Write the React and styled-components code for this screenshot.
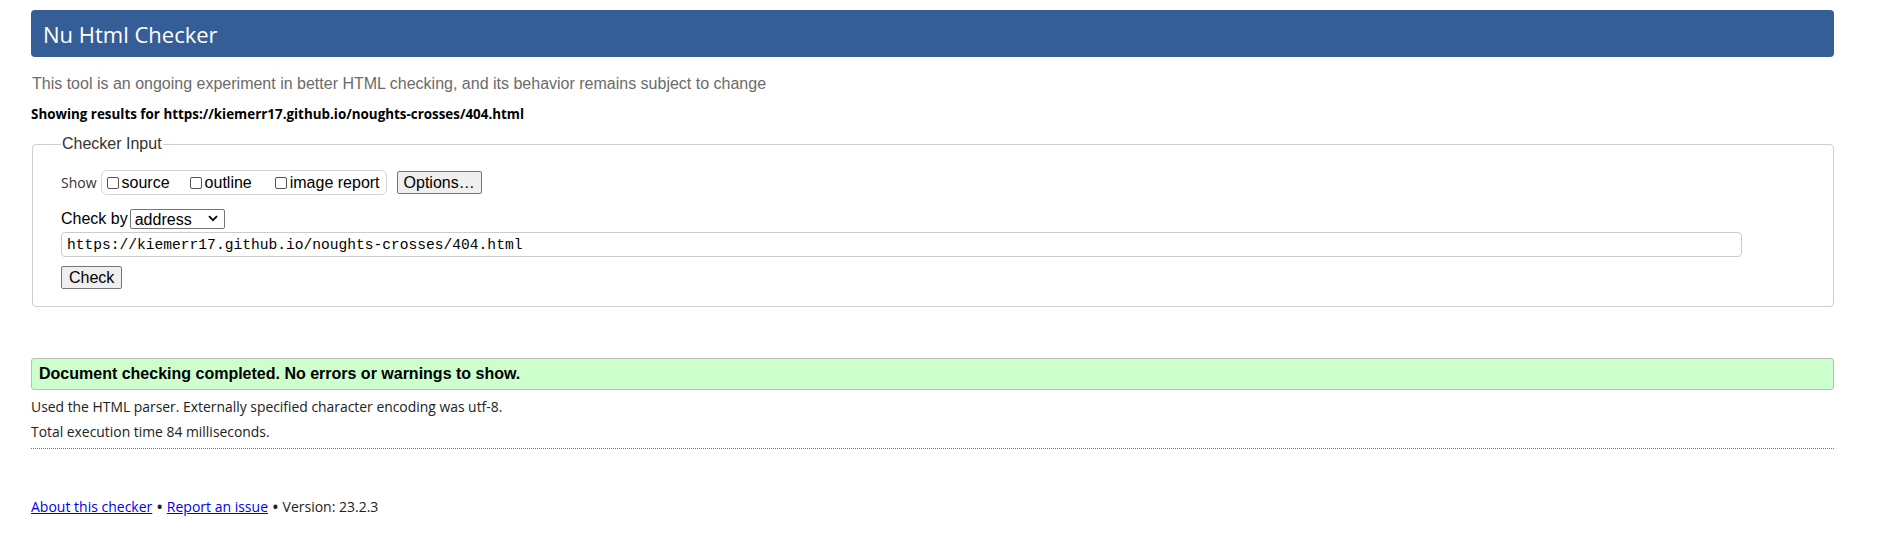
import React from "react";
import styled, { createGlobalStyle } from "styled-components";

const Global = createGlobalStyle`
  html, body { margin: 0; padding: 0; background: #fff; }
  body { font-family: "Liberation Sans", Arial, sans-serif; color: #000; }
`;

const Page = styled.div`
  width: 1803px;
  margin-left: 31px;
  padding-top: 10px;
`;

const Header = styled.h1`
  margin: 0;
  height: 47px;
  display: flex;
  align-items: center;
  padding-left: 12px;
  background: #365e96;
  border-radius: 4px;
  color: #fff;
  font-family: "Open Sans", sans-serif;
  font-weight: 400;
  font-size: 22px;
`;

const Intro = styled.p`
  margin: 17px 0 0 1px;
  font-size: 16px;
  line-height: 20px;
  color: #6b6b6b;
`;

const Showing = styled.p`
  margin: 10px 0 0 0;
  font-family: "Open Sans", sans-serif;
  font-weight: 700;
  font-size: 13.4px;
  line-height: 20px;
`;

const Fieldset = styled.fieldset`
  margin: 11px 0 0 1px;
  padding: 17px 28px 17px 28px;
  border: 1px solid #cfcfcf;
  border-radius: 4px;
  display: flex;
  flex-direction: column;
  align-items: flex-start;
`;

const Legend = styled.legend`
  padding: 0 1px;
  margin-left: 0;
  font-size: 16px;
  color: #333;
`;

const Row = styled.div`
  display: flex;
  align-items: center;
  margin-top: ${(p) => p.$mt || 0}px;
`;

const SmallLabel = styled.span`
  font-family: "Open Sans", sans-serif;
  font-size: 14px;
  color: #333;
  margin-right: 4px;
`;

const Group = styled.div`
  display: flex;
  align-items: center;
  height: 23px;
  padding: 0 6px 0 5px;
  border: 1px solid #d4d4d4;
  border-radius: 6px;
`;

const CheckLabel = styled.label`
  display: inline-flex;
  align-items: center;
  font-size: 16px;
  margin-right: ${(p) => p.$mr || 0}px;
`;

const Box = styled.input`
  appearance: none;
  -webkit-appearance: none;
  width: 12px;
  height: 12px;
  margin: 0 3px 0 0;
  border: 1px solid #555;
  border-radius: 2px;
  background: #fff;
`;

const Button = styled.button`
  font-family: "Liberation Sans", Arial, sans-serif;
  font-size: 16px;
  color: #000;
  background: #efefef;
  border: 1px solid #767676;
  border-radius: 2px;
  height: 23px;
  padding: 0 ${(p) => p.$px || 6}px;
  margin-left: ${(p) => p.$ml || 0}px;
`;

const Text16 = styled.span`
  font-size: 16px;
  margin-right: 2px;
`;

const SelectWrap = styled.div`
  position: relative;
  display: inline-flex;
`;

const Select = styled.select`
  appearance: none;
  -webkit-appearance: none;
  width: 95px;
  height: 20px;
  padding: 0 0 0 4px;
  font-family: "Liberation Sans", Arial, sans-serif;
  font-size: 16px;
  color: #000;
  background: #fff;
  border: 1px solid #767676;
  border-radius: 2px;
`;

const Chevron = styled.svg`
  position: absolute;
  right: 7px;
  top: 6px;
  pointer-events: none;
`;

const UrlInput = styled.input`
  box-sizing: border-box;
  width: 1681px;
  height: 25px;
  padding: 0 5px;
  border: 1px solid #cccccc;
  border-radius: 4px;
  font-family: "Liberation Mono", monospace;
  font-size: 14.6px;
  color: #000;
  outline: none;
`;

const Success = styled.div`
  margin-top: 51px;
  height: 30px;
  display: flex;
  align-items: center;
  padding-left: 7px;
  background: #ccffcc;
  border: 1px solid #bcbcbc;
  border-radius: 3px;
  font-size: 16px;
  font-weight: 700;
`;

const Detail = styled.p`
  margin: ${(p) => p.$mt || 0}px 0 0 0;
  font-family: "Open Sans", sans-serif;
  font-size: 13.9px;
  line-height: 20px;
  color: #222;
`;

const Rule = styled.hr`
  margin: 6px 0 0 0;
  border: 0;
  border-top: 1px dotted #7a7a7a;
  height: 0;
`;

const Footer = styled.p`
  margin: 48px 0 0 0;
  font-family: "Open Sans", sans-serif;
  font-size: 14px;
  line-height: 20px;
  color: #222;
`;

const Bullet = styled.span`
  font-weight: 700;
  margin: 0 1px;
`;

const Link = styled.a`
  color: #0000ee;
  text-decoration: underline;
`;

export default function App() {
  return (
    <>
      <Global />
      <Page>
        <Header>Nu Html Checker</Header>
        <Intro>
          This tool is an ongoing experiment in better HTML checking, and its
          behavior remains subject to change
        </Intro>
        <Showing>
          Showing results for https://kiemerr17.github.io/noughts-crosses/404.html
        </Showing>
        <Fieldset>
          <Legend>Checker Input</Legend>
          <Row>
            <SmallLabel>Show</SmallLabel>
            <Group>
              <CheckLabel $mr={20}>
                <Box type="checkbox" />
                source
              </CheckLabel>
              <CheckLabel $mr={23}>
                <Box type="checkbox" />
                outline
              </CheckLabel>
              <CheckLabel>
                <Box type="checkbox" />
                image report
              </CheckLabel>
            </Group>
            <Button $ml={10} $px={6}>Options…</Button>
          </Row>
          <Row $mt={14}>
            <Text16>Check by</Text16>
            <SelectWrap>
              <Select defaultValue="address">
                <option value="address">address</option>
                <option value="file">file upload</option>
                <option value="text">text input</option>
              </Select>
              <Chevron width="10" height="7" viewBox="0 0 10 7">
                <path d="M1 1.2 L5 5.2 L9 1.2" fill="none" stroke="#000" strokeWidth="1.8" />
              </Chevron>
            </SelectWrap>
          </Row>
          <Row $mt={3}>
            <UrlInput
              type="url"
              defaultValue="https://kiemerr17.github.io/noughts-crosses/404.html"
            />
          </Row>
          <Row $mt={9}>
            <Button $px={7}>Check</Button>
          </Row>
        </Fieldset>
        <Success>Document checking completed. No errors or warnings to show.</Success>
        <Detail $mt={7}>
          Used the HTML parser. Externally specified character encoding was utf-8.
        </Detail>
        <Detail $mt={5}>Total execution time 84 milliseconds.</Detail>
        <Rule />
        <Footer>
          <Link href="#">About this checker</Link> <Bullet>•</Bullet>{" "}
          <Link href="#">Report an issue</Link> <Bullet>•</Bullet> Version: 23.2.3
        </Footer>
      </Page>
    </>
  );
}
